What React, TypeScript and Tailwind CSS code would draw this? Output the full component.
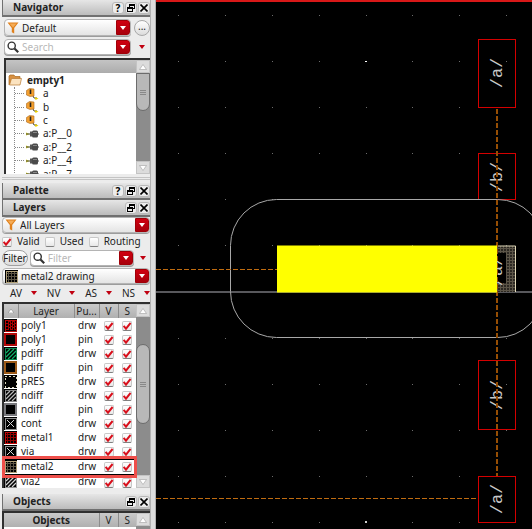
import React from "react";

type Swatch = { ink: string; edge: string; pattern: "check" | "solid" | "hatch" | "dots" | "cross" | "grid" };
type Layer = { name: string; purpose: string; swatch: Swatch; selected?: boolean };

const LAYERS: Layer[] = [
  { name: "poly1", purpose: "drw", swatch: { ink: "#a80000", edge: "#b80808", pattern: "check" } },
  { name: "poly1", purpose: "pin", swatch: { ink: "#000", edge: "#b00808", pattern: "solid" } },
  { name: "pdiff", purpose: "drw", swatch: { ink: "#10b068", edge: "#0c8850", pattern: "hatch" } },
  { name: "pdiff", purpose: "pin", swatch: { ink: "#000", edge: "#9c5a18", pattern: "solid" } },
  { name: "pRES", purpose: "drw", swatch: { ink: "#e8e4c8", edge: "#d8d4b8", pattern: "dots" } },
  { name: "ndiff", purpose: "drw", swatch: { ink: "#b8b8b8", edge: "#888888", pattern: "hatch" } },
  { name: "ndiff", purpose: "pin", swatch: { ink: "#000", edge: "#78787c", pattern: "solid" } },
  { name: "cont", purpose: "drw", swatch: { ink: "#d8d8d8", edge: "#909090", pattern: "cross" } },
  { name: "metal1", purpose: "drw", swatch: { ink: "#900000", edge: "#c00808", pattern: "grid" } },
  { name: "via", purpose: "drw", swatch: { ink: "#d8d8d8", edge: "#909090", pattern: "cross" } },
  { name: "metal2", purpose: "drw", swatch: { ink: "#5c5444", edge: "#b0a078", pattern: "grid" }, selected: true },
  { name: "via2", purpose: "drw", swatch: { ink: "#d0d0d0", edge: "#909090", pattern: "hatch" } },
];

const TREE = [
  { name: "a", kind: "net" },
  { name: "b", kind: "net" },
  { name: "c", kind: "net" },
  { name: "a:P__0", kind: "pin" },
  { name: "a:P__2", kind: "pin" },
  { name: "a:P__4", kind: "pin" },
  { name: "a:P__7", kind: "pin" },
];

function LayerSwatch({ ink, edge, pattern }: Swatch) {
  return (
    <svg width="13" height="13" viewBox="0 0 13 13" className="block shrink-0" shapeRendering="crispEdges">
      <rect width="13" height="13" fill="#000" />
      {pattern === "check" && (
        <path d="M2 4h2V2h2v2h2V2h2v2h2M2 7h2V5h2v2h2V5h2v2h2M2 10h2V8h2v2h2V8h2v2h2" stroke={ink} fill="none" />
      )}
      {pattern === "hatch" && (
        <path
          d="M2 6L6 2M2 10L10 2M4 12l8-8M8 12l4-4"
          stroke={ink}
          strokeWidth="1.2"
          fill="none"
          shapeRendering="auto"
        />
      )}
      {pattern === "cross" && <path d="M3 3l7 7M10 3l-7 7" stroke={ink} fill="none" shapeRendering="auto" />}
      {pattern === "grid" && (
        <path d="M3.5 1v11M6.5 1v11M9.5 1v11M1 3.5h11M1 6.5h11M1 9.5h11" stroke={ink} fill="none" />
      )}
      <rect
        x="1"
        y="1"
        width="11"
        height="11"
        fill="none"
        stroke={edge}
        strokeWidth={pattern === "solid" ? 2 : 1}
        strokeDasharray={pattern === "dots" ? "2 2" : undefined}
      />
    </svg>
  );
}

function Funnel() {
  return (
    <svg width="12" height="12" viewBox="0 0 12 12" className="block shrink-0">
      <path d="M0.5 0.5h11L7.2 6v5.600L4.8 10.200V6z" fill="#e0801c" />
      <path d="M2.5 1.5h7L6 5.5z" fill="#f4ac58" />
    </svg>
  );
}

function Magnifier() {
  return (
    <svg width="12" height="12" viewBox="0 0 12 12" className="block shrink-0">
      <circle cx="4.7" cy="4.7" r="3.6" fill="#fff" stroke="#333" strokeWidth="1.4" />
      <path d="M7.5 7.5l3.7 3.7" stroke="#333" strokeWidth="2.2" />
    </svg>
  );
}

function Arrow({ className }: { className: string }) {
  return (
    <svg width="6" height="4" viewBox="0 0 6 4" className={className}>
      <path d="M0 0h6L3 4z" fill="currentColor" />
    </svg>
  );
}

function RedButton() {
  return (
    <span className="flex w-[14px] shrink-0 items-center justify-center self-stretch rounded-r-[3px] border border-[#a00008] bg-gradient-to-b from-[#d00010] to-[#a8000c]">
      <Arrow className="text-white" />
    </span>
  );
}

const fieldBox =
  "flex min-w-0 flex-1 items-center rounded-[4px] border border-[#b4b4b4] shadow-[0_1px_0_#9c9c9c] pl-[2px]";

function Combo({ label, value, icon, height }: { label: string; value: string; icon: React.ReactNode; height: string }) {
  return (
    <label className={`${fieldBox} ${height} bg-gradient-to-b from-white to-[#e4e4e4]`}>
      {icon}
      <select aria-label={label} className="min-w-0 flex-1 appearance-none bg-transparent pl-[3px] leading-[14px] outline-none">
        <option>{value}</option>
      </select>
      <RedButton />
    </label>
  );
}

function SearchField({ placeholder }: { placeholder: string }) {
  return (
    <label className={`${fieldBox} h-4 bg-white`}>
      <Magnifier />
      <input
        aria-label={placeholder}
        placeholder={placeholder}
        className="w-0 min-w-0 flex-1 bg-transparent pl-[3px] leading-[14px] outline-none placeholder:text-[#b8b8b8]"
      />
      <RedButton />
    </label>
  );
}

function Tick({ label, checked }: { label: string; checked?: boolean }) {
  return (
    <span className="inline-grid size-[10px] shrink-0 place-items-center align-middle">
      <input
        type="checkbox"
        aria-label={label}
        defaultChecked={checked}
        className="peer col-start-1 row-start-1 size-[10px] appearance-none rounded-[2px] border border-[#c8c8c8] border-b-[#808080] bg-gradient-to-b from-white to-[#e8e8e8]"
      />
      <svg
        width="10"
        height="10"
        viewBox="0 0 10 10"
        className="pointer-events-none invisible col-start-1 row-start-1 peer-checked:visible"
      >
        <path d="M1.6 4.8l2.4 2.8L8.6 2" fill="none" stroke="#d8101c" strokeWidth="2" />
      </svg>
    </span>
  );
}

const titleButton =
  "flex size-3 items-center justify-center rounded-[3px] border border-[#b8b8b8] bg-[#ececec] text-black";

function TitleBar({ title, help }: { title: string; help?: boolean }) {
  return (
    <header className="flex h-[17px] shrink-0 items-center gap-px border-b-2 border-l border-[#707070] bg-gradient-to-b from-[#e6e6e6] to-[#bcbcbc] pl-[10px]">
      <h2 className="flex-1 font-bold">{title}</h2>
      {help && (
        <button type="button" aria-label={`${title} help`} className={`${titleButton} font-bold leading-none`}>
          ?
        </button>
      )}
      <button type="button" aria-label={`Float ${title}`} className={titleButton}>
        <svg width="8" height="8" viewBox="0 0 8 8" shapeRendering="crispEdges" className="shrink-0">
          <path d="M2.5 3V0.5h5v4H6M2 1h6" fill="none" stroke="#000" />
          <path d="M0.5 3.5h5v4h-5zM0 4h6" fill="none" stroke="#000" />
        </svg>
      </button>
      <button type="button" aria-label={`Close ${title}`} className={titleButton}>
        <svg width="8" height="8" viewBox="0 0 8 8" className="shrink-0">
          <path d="M0.5 0.5l7 7M7.5 0.5l-7 7" stroke="#000" strokeWidth="1.600" />
        </svg>
      </button>
    </header>
  );
}

function ScrollEnd({ up }: { up?: boolean }) {
  return (
    <button
      type="button"
      aria-label={up ? "Scroll up" : "Scroll down"}
      className="flex h-[13px] shrink-0 items-center justify-center border border-[#c4c4c4] bg-[#dcdcdc]"
    >
      <svg width="8" height="6" viewBox="0 0 8 6">
        <path d={up ? "M0.5 5.5h7L4 0.5z" : "M0.5 0.5h7L4 5.5z"} fill="#fff" stroke="#aaa" strokeWidth="0.7" />
      </svg>
    </button>
  );
}

function ScrollBar({ thumb }: { thumb: string }) {
  return (
    <div className="flex w-[14px] shrink-0 flex-col bg-[#8c8c8c]">
      <ScrollEnd up />
      <div className="min-h-0 flex-1 overflow-hidden">
        <div className={`${thumb} flex flex-col items-center justify-center gap-px border border-[#6c6c6c] bg-[#b8b8b8]`}>
          <i className="h-px w-[6px] bg-[#888]" />
          <i className="h-px w-[6px] bg-[#888]" />
          <i className="h-px w-[6px] bg-[#888]" />
        </div>
      </div>
      <ScrollEnd />
    </div>
  );
}

function NetIcon() {
  return (
    <svg width="13" height="12" viewBox="0 0 13 12" className="block shrink-0">
      <path d="M6 6l2 4h3" fill="none" stroke="#444" />
      <path d="M0.5 2.500l3-2 4.500 0.500v7L4 8.500 0.500 7z" fill="#f4a030" stroke="#a86820" strokeWidth="0.6" />
      <path d="M4.500 1.500v4.500" stroke="#222" strokeWidth="1.6" />
      <path d="M8.500 9l4 1.500-3 1.5z" fill="#e8d000" />
    </svg>
  );
}

function PinIcon() {
  return (
    <svg width="13" height="8" viewBox="0 0 13 8" className="block shrink-0">
      <path d="M0 2.500l4 1.500-4 1.5z" fill="#d8d020" />
      <path d="M0 4h6M10 4h3" stroke="#444" />
      <rect x="4" y="1.5" width="2" height="5" fill="#555" />
      <rect x="6" y="0.5" width="6" height="7" rx="1.5" fill="#4a4a4a" />
      <path d="M7 2.5h4" stroke="#888" />
    </svg>
  );
}

function Navigator() {
  return (
    <section className="shrink-0">
      <TitleBar title="Navigator" help />
      <div className="flex items-center gap-[3px] pt-[2px] pl-[2px]">
        <Combo label="Navigator filter" value="Default" icon={<Funnel />} height="h-[17px]" />
        <button
          type="button"
          aria-label="More"
          className="flex size-4 shrink-0 items-center justify-center rounded-full border border-[#a8a8a8] bg-gradient-to-b from-white to-[#dcdcdc] pb-[3px] leading-none"
        >
          ...
        </button>
      </div>
      <div className="flex items-center gap-[3px] pt-[3px] pl-[2px]">
        <SearchField placeholder="Search" />
        <button type="button" aria-label="Search options" className="flex w-4 shrink-0 justify-center">
          <Arrow className="text-[#c00010]" />
        </button>
      </div>
      <div className="mt-[3px] ml-[2px] flex h-[116px] overflow-hidden border-t-2 border-l-2 border-[#303030] bg-white">
        <div className="min-w-0 flex-1 overflow-hidden">
          <div className="h-[13px] bg-gradient-to-b from-[#c4c4c4] to-[#acacac]" />
          <div className="flex h-[14px] items-center gap-[5px] pl-[2px] font-bold">
            <svg width="14" height="12" viewBox="0 0 14 12" className="block">
              <path d="M1 11V2l1-1h4l1 1.500h5V5" fill="#d89040" stroke="#a86820" strokeWidth="0.7" />
              <path d="M1.500 11L3.500 4.500h10L12 11z" fill="#fbe3c0" stroke="#b87830" strokeWidth="0.7" />
            </svg>
            empty1
          </div>
          <ul className="ml-2 grid h-[94px] auto-rows-fr border-l border-dotted border-[#888]">
            {TREE.map((node) => (
              <li key={node.name} className="flex items-center">
                <i className="w-[9px] shrink-0 border-t border-dotted border-[#888]" />
                <span className="flex w-[19px] shrink-0 pl-[2px]">{node.kind === "net" ? <NetIcon /> : <PinIcon />}</span>
                {node.name}
              </li>
            ))}
          </ul>
        </div>
        <ScrollBar thumb="h-[38px] rounded-b-full" />
      </div>
    </section>
  );
}

const headCell = "border-r border-[#8c8c8c] p-0 font-normal";

function Layers() {
  return (
    <section className="shrink-0">
      <TitleBar title="Layers" />
      <div className="flex">
        <Combo label="Layer set" value="All Layers" icon={<Funnel />} height="h-4" />
      </div>
      <div className="flex h-[17px] items-center gap-[5px]">
        {["Valid", "Used", "Routing"].map((name) => (
          <label key={name} className="flex items-center gap-[5px]">
            <Tick label={name} checked={name === "Valid"} />
            {name}
          </label>
        ))}
      </div>
      <div className="flex items-center gap-[2px]">
        <button
          type="button"
          className="h-4 rounded-full border border-[#a0a0a0] bg-gradient-to-b from-white to-[#dcdcdc] leading-[14px]"
        >
          Filter
        </button>
        <SearchField placeholder="Filter" />
        <button type="button" aria-label="Filter options" className="flex w-[14px] shrink-0 justify-center">
          <Arrow className="text-[#c00010]" />
        </button>
      </div>
      <div className="flex pt-[2px]">
        <Combo
          label="Active layer"
          value="metal2 drawing"
          icon={<LayerSwatch ink="#5c5444" edge="#b0a078" pattern="grid" />}
          height="h-4"
        />
      </div>
      <div className="flex h-[18px] items-center justify-between pl-2">
        {["AV", "NV", "AS", "NS"].map((name) => (
          <button key={name} type="button" className="flex items-center gap-[9px]">
            {name}
            <Arrow className="text-[#c00010]" />
          </button>
        ))}
      </div>
      <div className="relative">
        <div className="flex h-[186px] overflow-hidden border-t-2 border-l-2 border-[#303030] bg-white">
          <div className="min-w-0 flex-1 overflow-hidden">
            <table className="h-[185px] w-full table-fixed border-collapse">
              <colgroup>
                <col className="w-[14px]" />
                <col />
                <col className="w-[25px]" />
                <col className="w-[19px]" />
                <col className="w-[18px]" />
              </colgroup>
              <thead>
                <tr className="h-[14px] bg-gradient-to-b from-[#cacaca] to-[#b0b0b0]">
                  <th className={headCell} aria-label="Sort">
                    <svg width="6" height="4" viewBox="0 0 6 4" className="mx-auto block">
                      <path d="M0 4h6L3 0z" fill="#fff" stroke="#777" strokeWidth="0.5" />
                    </svg>
                  </th>
                  <th className={headCell}>Layer</th>
                  <th className={headCell}>Pu...</th>
                  <th className={headCell}>V</th>
                  <th className="p-0 font-normal">S</th>
                </tr>
              </thead>
              <tbody>
                {LAYERS.map((layer, i) => (
                  <tr key={i} className={layer.selected ? "border-y border-black" : ""}>
                    <td className="p-0">
                      <LayerSwatch {...layer.swatch} />
                    </td>
                    <td className="p-0 pl-[3px] leading-[13px]">{layer.name}</td>
                    <td className="p-0 pl-1 leading-[13px]">{layer.purpose}</td>
                    <td className="p-0 text-center leading-none">
                      <Tick label={`${layer.name} ${layer.purpose} visible`} checked />
                    </td>
                    <td className="p-0 text-center leading-none">
                      <Tick label={`${layer.name} ${layer.purpose} selectable`} checked />
                    </td>
                  </tr>
                ))}
              </tbody>
            </table>
          </div>
          <ScrollBar thumb="mt-[27px] h-[80px] rounded-full" />
        </div>
        <div className="pointer-events-none absolute right-[13px] bottom-[10px] left-0 h-[22px] border-3 border-[#ee4f4b]" />
      </div>
    </section>
  );
}

function Objects() {
  return (
    <section className="flex min-h-0 flex-1 flex-col">
      <TitleBar title="Objects" />
      <div className="flex min-h-0 flex-1 overflow-hidden border-t-2 border-l-2 border-[#303030] bg-white">
        <div className="min-w-0 flex-1">
          <table className="w-full table-fixed border-collapse">
            <colgroup>
              <col />
              <col className="w-[19px]" />
              <col className="w-[18px]" />
            </colgroup>
            <thead>
              <tr className="h-[14px] bg-gradient-to-b from-[#cacaca] to-[#b0b0b0]">
                <th className="border-r border-[#8c8c8c] p-0 font-bold">Objects</th>
                <th className={headCell}>V</th>
                <th className="p-0 font-normal">S</th>
              </tr>
            </thead>
          </table>
        </div>
        <div className="flex w-[14px] shrink-0 flex-col bg-[#8c8c8c]">
          <ScrollEnd up />
        </div>
      </div>
    </section>
  );
}

const GRID_X = [22, 69, 116, 163, 210, 256, 303, 350];
const GRID_Y = [15, 61, 107, 153, 199, 245, 338, 384, 430, 476, 522];

function NetLabel({ y, children }: { y: number; children: string }) {
  return (
    <text
      transform={`translate(346 ${y}) rotate(-90)`}
      textAnchor="middle"
      fill="#c8c8c8"
      fontSize="17"
      fontFamily="'Liberation Mono', monospace"
    >
      {children}
    </text>
  );
}

function LayoutCanvas() {
  return (
    <main className="min-w-0 flex-1 overflow-hidden border-t-2 border-[#d81818] bg-black">
      <svg className="-mt-[2px] block h-full w-full overflow-visible" role="img" aria-label="Layout view">
        <defs>
          <pattern id="mesh" width="3" height="3" patternUnits="userSpaceOnUse">
            <rect width="3" height="3" fill="#5c5548" />
            <rect width="2" height="2" fill="#2c2822" />
          </pattern>
        </defs>
        <g shapeRendering="crispEdges">
          {GRID_X.map((x) =>
            GRID_Y.map((y) => <rect key={`${x}-${y}`} x={x} y={y} width="1" height="1" fill="#6c6c6c" />),
          )}
          <rect x="209" y="61" width="2" height="1" fill="#fff" />
          <rect x="209" y="521" width="2" height="2" fill="#ccc" />
        </g>
        <g fill="none" stroke="#d40000" shapeRendering="crispEdges">
          <rect x="322.5" y="39.500" width="37" height="68" />
          <rect x="322.5" y="153.500" width="37" height="46" />
          <rect x="322.5" y="360.500" width="37" height="69" />
          <rect x="322.5" y="476.500" width="37" height="46" />
        </g>
        <path d="M0 292h2000" stroke="#58585c" strokeWidth="2" shapeRendering="crispEdges" />
        <rect x="341" y="246" width="19" height="46" fill="url(#mesh)" />
        <rect x="341" y="253" width="9" height="30" fill="#000" />
        <path d="M341 246h18.500v46" fill="none" stroke="#e0d8b8" />
        <NetLabel y={73}>/a/</NetLabel>
        <NetLabel y={177}>/b/</NetLabel>
        <NetLabel y={271}>/a/</NetLabel>
        <NetLabel y={395}>/b/</NetLabel>
        <NetLabel y={499}>/a/</NetLabel>
        <rect x="74.500" y="199.500" width="313" height="138" rx="46" fill="none" stroke="#a8a8a8" />
        <path
          d="M0 269.500h121M0 498.500h322"
          fill="none"
          stroke="#c06c10"
          strokeDasharray="5 2"
          shapeRendering="crispEdges"
        />
        <path d="M341 109v367" stroke="#964e04" strokeWidth="2" strokeDasharray="5 2" shapeRendering="crispEdges" />
        <rect x="121" y="245.500" width="220" height="47" fill="#ff0" />
      </svg>
    </main>
  );
}

export default function App() {
  return (
    <div className="flex h-screen overflow-hidden bg-[#ececec] font-['Noto_Sans','Open_Sans',sans-serif] text-[10px] leading-[13px] text-[#222]">
      <aside className="flex w-[150px] shrink-0 flex-col pl-[2px]">
        <Navigator />
        <div className="my-[3px] h-[3px] shrink-0 border-y border-[#c4c4c4]" />
        <TitleBar title="Palette" help />
        <Layers />
        <div className="h-[6px] shrink-0" />
        <Objects />
      </aside>
      <div className="w-[6px] shrink-0 border-x border-[#b0b0b0] bg-[#dcdcdc]" />
      <LayoutCanvas />
    </div>
  );
}
